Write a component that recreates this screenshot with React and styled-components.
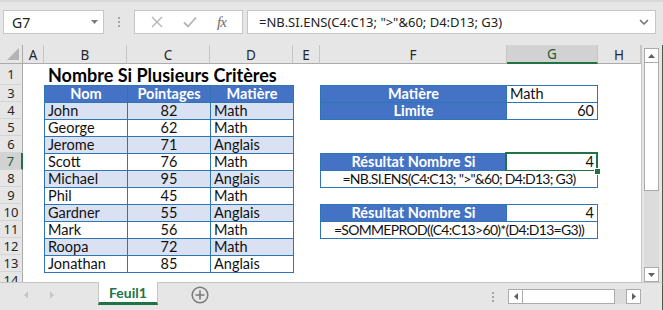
import React from 'react';
import styled, { createGlobalStyle, css } from 'styled-components';

const GlobalStyle = createGlobalStyle`
  html, body {
    margin: 0;
    padding: 0;
    background: #e6e6e6;
  }
  body {
    width: 663px;
    height: 310px;
    overflow: hidden;
    font-family: "Noto Sans", "Open Sans", sans-serif;
  }
`;

const green = '#217346';
const blue = '#2e75b6';
const headFill = '#4472c4';
const bandFill = '#d9e1f2';

const Window = styled.div`
  width: 663px;
  height: 310px;
  display: flex;
  flex-direction: column;
  background: #e6e6e6;
`;

/* ---------- formula bar ---------- */

const FormulaBar = styled.div`
  height: 45px;
  flex: none;
  display: flex;
  align-items: flex-start;
  box-sizing: border-box;
  padding: 8px 7px 0 3px;
  border-top: 2px solid #d9d9d9;
`;

const Field = styled.div`
  height: 24px;
  box-sizing: border-box;
  background: #fff;
  border: 1px solid #c6c6c6;
  display: flex;
  align-items: center;
`;

const NameBox = styled(Field)`
  width: 101px;
  justify-content: space-between;
  padding: 0 5px 0 8px;
  font-size: 14px;
  color: #222;
`;

const Grip = styled.div`
  width: 2px;
  margin: 7px 14px 0 14px;
  display: flex;
  flex-direction: column;
  gap: 2px;
  span {
    width: 2px;
    height: 2px;
    background: #a6a6a6;
  }
`;

const ActionBox = styled(Field)`
  width: 109px;
  justify-content: space-around;
  padding: 0 6px;
`;

const Fx = styled.span`
  font-family: "Liberation Serif", serif;
  font-style: italic;
  font-size: 15px;
  color: #6a6a6a;
  letter-spacing: -1px;
`;

const FormulaInput = styled(Field)`
  flex: 1;
  margin-left: 4px;
  padding: 0 6px 0 11px;
  justify-content: space-between;
  font-size: 13px;
  color: #222;
  white-space: nowrap;
`;

/* ---------- sheet ---------- */

const SheetArea = styled.div`
  height: 237px;
  flex: none;
  display: flex;
`;

const Grid = styled.div`
  width: 641px;
  height: 237px;
  display: grid;
  grid-template-columns: 23px 21px 83px 83px 83px 27px 187px 91px 43px;
  grid-template-rows: 19px 21px repeat(11, 17px) 10px;
  background: #fff;
  border-right: 1px solid #c6c6c6;
  overflow: hidden;
  font-family: "Lato", "Liberation Sans", sans-serif;
  font-size: 14.5px;
  color: #111;
`;

const Corner = styled.div`
  grid-row: 1;
  grid-column: 1;
  background: #e6e6e6;
  border-right: 1px solid #ababab;
  border-bottom: 1px solid #ababab;
  box-sizing: border-box;
  display: flex;
  align-items: flex-end;
  justify-content: flex-end;
  padding: 0 3px 3px 0;
`;

const ColHead = styled.div`
  grid-row: 1;
  grid-column: ${(p) => p.$col};
  background: ${(p) => (p.$active ? '#d2d2d2' : '#e6e6e6')};
  border-right: 1px solid #c6c6c6;
  border-bottom: ${(p) => (p.$active ? `2px solid ${green}` : '1px solid #ababab')};
  box-sizing: border-box;
  display: flex;
  align-items: center;
  justify-content: center;
  font-family: "Noto Sans", sans-serif;
  font-size: 13.5px;
  color: ${(p) => (p.$active ? '#1d5c38' : '#262626')};
  padding-top: 1px;
`;

const RowHead = styled.div`
  grid-column: 1;
  grid-row: ${(p) => p.$row};
  align-self: start;
  height: ${(p) => (p.$first ? 21 : 17)}px;
  background: ${(p) => (p.$active ? '#d2d2d2' : '#e6e6e6')};
  border-right: ${(p) => (p.$active ? `2px solid ${green}` : '1px solid #ababab')};
  border-bottom: 1px solid #d4d4d4;
  box-sizing: border-box;
  display: flex;
  align-items: center;
  justify-content: center;
  font-family: "Noto Sans", sans-serif;
  font-size: 13px;
  color: ${(p) => (p.$active ? '#1d5c38' : '#262626')};
`;

const Title = styled.div`
  grid-row: 2;
  grid-column: 3 / span 5;
  align-self: end;
  padding: 0 0 0 4px;
  font-weight: 700;
  font-size: 18px;
  line-height: 20px;
  white-space: nowrap;
  color: #000;
`;

const Table = styled.div`
  grid-row: ${(p) => p.$row} / span ${(p) => p.$span};
  grid-column: ${(p) => p.$col} / span ${(p) => p.$colSpan};
  align-self: start;
  justify-self: start;
  display: grid;
  grid-template-columns: ${(p) => p.$cols};
  grid-auto-rows: 16px;
  gap: 1px;
  border: 1px solid ${blue};
  background: ${blue};
`;

const Cell = styled.div`
  position: relative;
  background: ${(p) => (p.$head ? headFill : p.$band ? bandFill : '#fff')};
  color: ${(p) => (p.$head ? '#fff' : '#111')};
  font-weight: ${(p) => (p.$head ? 700 : 400)};
  text-align: ${(p) => p.$align || 'left'};
  padding: 0 3px;
  line-height: 16px;
  white-space: nowrap;
  ${(p) => p.$span && css`grid-column: span ${p.$span};`}
  ${(p) =>
    p.$formula &&
    css`
      font-size: 14px;
      letter-spacing: -0.7px;
    `}
  ${(p) =>
    p.$selected &&
    css`
      &::after {
        content: '';
        position: absolute;
        left: -2px;
        top: -2px;
        right: -1px;
        bottom: -2px;
        border: 2px solid ${green};
      }
      &::before {
        content: '';
        position: absolute;
        right: -4px;
        bottom: -5px;
        width: 5px;
        height: 5px;
        background: ${green};
        border: 1px solid #fff;
        z-index: 2;
      }
    `}
`;

/* ---------- scroll bars ---------- */

const VScrollWrap = styled.div`
  flex: 1;
  display: flex;
  padding: 3px 0 0 2px;
  border-right: 1px solid ${green};
`;

const VScroll = styled.div`
  width: 15px;
  display: flex;
  flex-direction: column;
`;

const ScrollBtn = styled.div`
  width: 15px;
  height: 15px;
  flex: none;
  box-sizing: border-box;
  background: #fff;
  border: 1px solid #ababab;
  display: flex;
  align-items: center;
  justify-content: center;
`;

const VThumb = styled.div`
  height: 128px;
  flex: none;
  background: #fff;
  border-left: 1px solid #ababab;
  border-right: 1px solid #ababab;
  border-bottom: 1px solid #ababab;
  box-sizing: border-box;
`;

const Track = styled.div`
  flex: 1;
  background: #dcdcdc;
`;

const BottomBar = styled.div`
  flex: 1;
  display: flex;
  align-items: flex-start;
  border-top: 1px solid #c6c6c6;
  border-right: 1px solid ${green};
  box-sizing: border-box;
`;

const Nav = styled.div`
  width: 98px;
  height: 24px;
  display: flex;
  align-items: center;
  gap: 20px;
  padding-left: 23px;
  box-sizing: border-box;
`;

const SheetTab = styled.div`
  width: 60px;
  height: 23px;
  margin-top: -1px;
  box-sizing: border-box;
  background: #fff;
  border-left: 1px solid #c6c6c6;
  border-right: 1px solid #c6c6c6;
  border-bottom: 3px solid ${green};
  display: flex;
  align-items: center;
  justify-content: center;
  font-family: "Lato", sans-serif;
  font-weight: 700;
  font-size: 14px;
  color: ${green};
`;

const AddSheet = styled.div`
  margin: 3px 0 0 33px;
  width: 18px;
  height: 18px;
  display: flex;
`;

const HScrollGroup = styled.div`
  margin: 6px 21px 0 auto;
  display: flex;
  align-items: center;
`;

const VGrip = styled(Grip)`
  margin: 1px 14px 0 0;
`;

const HThumb = styled.div`
  width: 92px;
  height: 15px;
  box-sizing: border-box;
  background: #fff;
  border-top: 1px solid #ababab;
  border-bottom: 1px solid #ababab;
  border-right: 1px solid #ababab;
`;

const HTrack = styled.div`
  width: 11px;
  height: 15px;
  background: #dcdcdc;
`;

const Tri = ({ dir, color = '#707070', size = 7 }) => {
  const pts = {
    up: '0,5 7,5 3.5,1',
    down: '0,1 7,1 3.5,5',
    left: '5,0 5,7 1,3.5',
    right: '1,0 1,7 5,3.5',
  }[dir];
  const wide = dir === 'up' || dir === 'down';
  return (
    <svg width={wide ? size : 6} height={wide ? 6 : size} viewBox={wide ? '0 0 7 6' : '0 0 6 7'}>
      <polygon points={pts} fill={color} />
    </svg>
  );
};

const people = [
  ['John', 82, 'Math'],
  ['George', 62, 'Math'],
  ['Jerome', 71, 'Anglais'],
  ['Scott', 76, 'Math'],
  ['Michael', 95, 'Anglais'],
  ['Phil', 45, 'Math'],
  ['Gardner', 55, 'Anglais'],
  ['Mark', 56, 'Math'],
  ['Roopa', 72, 'Math'],
  ['Jonathan', 85, 'Anglais'],
];

const columns = ['A', 'B', 'C', 'D', 'E', 'F', 'G', 'H'];
const rows = [1, 3, 4, 5, 6, 7, 8, 9, 10, 11, 12, 13, 14];

export default function App() {
  return (
    <Window>
      <GlobalStyle />
      <FormulaBar>
        <NameBox>
          <span>G7</span>
          <Tri dir="down" color="#7a7a7a" />
        </NameBox>
        <Grip>
          <span />
          <span />
          <span />
        </Grip>
        <ActionBox>
          <svg width="12" height="12" viewBox="0 0 12 12">
            <path d="M1 1 L11 11 M11 1 L1 11" stroke="#b4b4b4" strokeWidth="1.3" />
          </svg>
          <svg width="14" height="12" viewBox="0 0 14 12">
            <path d="M1 6.5 L5 10.5 L13 1.5" stroke="#b4b4b4" strokeWidth="1.8" fill="none" />
          </svg>
          <Fx>fx</Fx>
        </ActionBox>
        <FormulaInput>
          <span>=NB.SI.ENS(C4:C13; "&gt;"&amp;60; D4:D13; G3)</span>
          <svg width="10" height="6" viewBox="0 0 10 6">
            <path d="M1 1 L5 5 L9 1" stroke="#707070" strokeWidth="1.5" fill="none" />
          </svg>
        </FormulaInput>
      </FormulaBar>

      <SheetArea>
        <Grid>
          <Corner>
            <svg width="12" height="12" viewBox="0 0 12 12">
              <polygon points="12,0 12,12 0,12" fill="#b4b4b4" />
            </svg>
          </Corner>
          {columns.map((c, i) => (
            <ColHead key={c} $col={i + 2} $active={c === 'G'}>
              {c}
            </ColHead>
          ))}
          {rows.map((r, i) => (
            <RowHead key={r} $row={i + 2} $first={r === 1} $active={r === 7}>
              {r}
            </RowHead>
          ))}

          <Title>Nombre Si Plusieurs Critères</Title>

          <Table $row={3} $span={11} $col={3} $colSpan={3} $cols="82px 82px 82px">
            <Cell $head $align="center">Nom</Cell>
            <Cell $head $align="center">Pointages</Cell>
            <Cell $head $align="center">Matière</Cell>
            {people.map(([name, score, subject], i) => (
              <React.Fragment key={name}>
                <Cell $band={i % 2 === 0}>{name}</Cell>
                <Cell $band={i % 2 === 0} $align="center">{score}</Cell>
                <Cell $band={i % 2 === 0}>{subject}</Cell>
              </React.Fragment>
            ))}
          </Table>

          <Table $row={3} $span={2} $col={7} $colSpan={2} $cols="185px 90px">
            <Cell $head $align="center">Matière</Cell>
            <Cell>Math</Cell>
            <Cell $head $align="center">Limite</Cell>
            <Cell $align="right">60</Cell>
          </Table>

          <Table $row={7} $span={2} $col={7} $colSpan={2} $cols="185px 90px">
            <Cell $head $align="center">Résultat Nombre Si</Cell>
            <Cell $align="right" $selected>4</Cell>
            <Cell $span={2} $align="center" $formula>
              =NB.SI.ENS(C4:C13; "&gt;"&amp;60; D4:D13; G3)
            </Cell>
          </Table>

          <Table $row={10} $span={2} $col={7} $colSpan={2} $cols="185px 90px">
            <Cell $head $align="center">Résultat Nombre Si</Cell>
            <Cell $align="right">4</Cell>
            <Cell $span={2} $align="center" $formula>
              =SOMMEPROD((C4:C13&gt;60)*(D4:D13=G3))
            </Cell>
          </Table>
        </Grid>

        <VScrollWrap>
          <VScroll>
            <ScrollBtn>
              <Tri dir="up" color="#606060" />
            </ScrollBtn>
            <VThumb />
            <Track />
            <ScrollBtn>
              <Tri dir="down" color="#606060" />
            </ScrollBtn>
          </VScroll>
        </VScrollWrap>
      </SheetArea>

      <BottomBar>
        <Nav>
          <Tri dir="left" color="#c4c4c4" size={8} />
          <Tri dir="right" color="#c4c4c4" size={8} />
        </Nav>
        <SheetTab>Feuil1</SheetTab>
        <AddSheet>
          <svg width="18" height="18" viewBox="0 0 18 18">
            <circle cx="9" cy="9" r="7.8" stroke="#7a7a7a" strokeWidth="1.5" fill="none" />
            <path d="M9 4.5 V13.5 M4.5 9 H13.5" stroke="#7a7a7a" strokeWidth="1.6" />
          </svg>
        </AddSheet>
        <HScrollGroup>
          <VGrip>
            <span />
            <span />
            <span />
          </VGrip>
          <ScrollBtn>
            <Tri dir="left" color="#606060" />
          </ScrollBtn>
          <HThumb />
          <HTrack />
          <ScrollBtn>
            <Tri dir="right" color="#606060" />
          </ScrollBtn>
        </HScrollGroup>
      </BottomBar>
    </Window>
  );
}
